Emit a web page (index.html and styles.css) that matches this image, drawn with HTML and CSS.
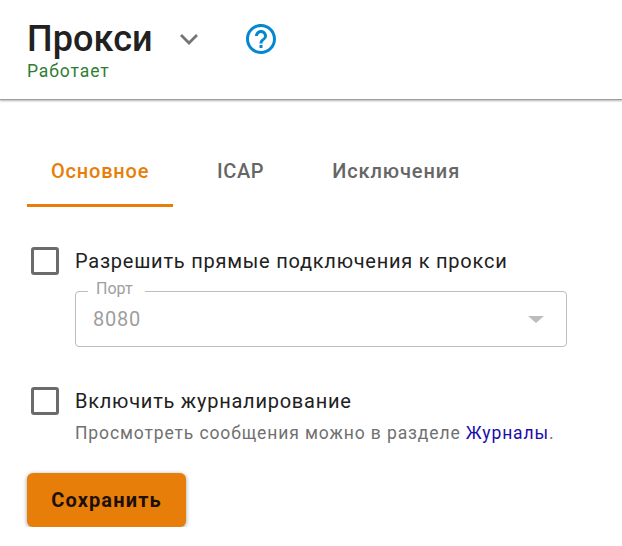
FILE: index.html
```html
<!DOCTYPE html>
<html lang="ru">
<head>
<meta charset="utf-8">
<title>Прокси</title>
<link rel="stylesheet" href="styles.css">
</head>
<body>
<header class="header">
  <div class="title-row">
    <h1 class="title">Прокси</h1>
    <svg class="chevron" viewBox="0 0 30 30"><path d="M7 11l8 8 8-8" fill="none" stroke="#757575" stroke-width="2.8"/></svg>
    <svg class="help" viewBox="2 2 20 20"><path fill="#0288d1" d="M11 18h2v-2h-2v2zm1-16C6.480 2 2 6.480 2 12s4.480 10 10 10 10-4.480 10-10S17.520 2 12 2zm0 18c-4.410 0-8-3.590-8-8s3.590-8 8-8 8 3.590 8 8-3.590 8-8 8zm0-14c-2.210 0-4 1.790-4 4h2c0-1.100.9-2 2-2s2 .9 2 2c0 2-3 1.750-3 5h2c0-2.250 3-2.500 3-5 0-2.210-1.790-4-4-4z"/></svg>
  </div>
  <div class="status">Работает</div>
</header>
<main class="content">
  <nav class="tabs">
    <div class="tab tab-active">Основное</div>
    <div class="tab">ICAP</div>
    <div class="tab">Исключения</div>
  </nav>
  <label class="check"><span class="box"></span><span class="check-text">Разрешить прямые подключения к прокси</span></label>
  <fieldset class="field">
    <legend class="field-label">Порт</legend>
    <div class="field-row"><span class="value">8080</span><span class="arrow"></span></div>
  </fieldset>
  <label class="check check-log"><span class="box"></span><span class="check-text">Включить журналирование</span></label>
  <p class="hint">Просмотреть сообщения можно в разделе <a class="link">Журналы</a>.</p>
  <button class="save">Сохранить</button>
</main>
</body>
</html>
```

FILE: styles.css
```css
* { box-sizing: border-box; }
body { margin: 0; background: #fff; color: #212121; font-family: Roboto, sans-serif; }
.header { height: 100px; padding: 18px 27px 0; border-bottom: 1px solid #9e9e9e; box-shadow: 0 1px 2px rgba(0,0,0,.3); }
.title-row { display: flex; align-items: center; height: 42px; }
.title { width: 126px; margin: 0; font-size: 36px; line-height: 42px; font-weight: 500; letter-spacing: .1px; }
.chevron { width: 30px; height: 30px; margin-left: 21px; }
.help { width: 30px; height: 30px; margin-left: 42px; }
.status { font-size: 17.5px; line-height: 22px; letter-spacing: .9px; color: #2e7d32; }
.content { padding: 35px 27px 0; }
.tabs { display: flex; height: 72px; }
.tab { padding: 0 24px; margin-right: 20px; line-height: 72px; font-size: 20px; font-weight: 500; letter-spacing: .8px; color: #666; }
.tab:nth-child(2) { letter-spacing: .6px; }
.tab:nth-child(3) { letter-spacing: .9px; }
.tab-active { width: 146px; color: #e87e0a; border-bottom: 3px solid #e87e0a; }
.check { display: flex; align-items: center; height: 28px; margin: 40px 0 0 4px; }
.box { width: 28px; height: 28px; border: 3px solid #6b6b6b; border-radius: 3px; margin-right: 16px; }
.check-text { font-size: 20px; letter-spacing: .76px; }
.field { width: 492px; height: 67px; margin: 5px 0 0 48px; padding: 0 22px 0 12px; border: 1px solid #bdbdbd; border-radius: 4px; }
.field-label { width: 57px; padding: 0 8px 4px; font-size: 16px; line-height: 18px; color: #9e9e9e; }
.field-row { display: flex; justify-content: space-between; align-items: center; height: 34px; padding-left: 5px; }
.value { font-size: 20px; letter-spacing: .8px; color: #9e9e9e; }
.arrow { border: 8px solid transparent; border-top: 7px solid #bdbdbd; border-bottom: 0; }
.check-log { margin-top: 40px; }
.hint { margin: 6px 0 0 48px; font-size: 17.5px; line-height: 24px; letter-spacing: .88px; color: #707070; }
.link { color: #1a0dab; }
.save { display: block; width: 159px; height: 54px; margin-top: 28px; padding: 0; border: 0; border-radius: 6px; background: #e87e0a; color: #1c1005; font: 700 20px Roboto, sans-serif; letter-spacing: 1.15px; box-shadow: 0 1px 4px rgba(0,0,0,.4); }
```
